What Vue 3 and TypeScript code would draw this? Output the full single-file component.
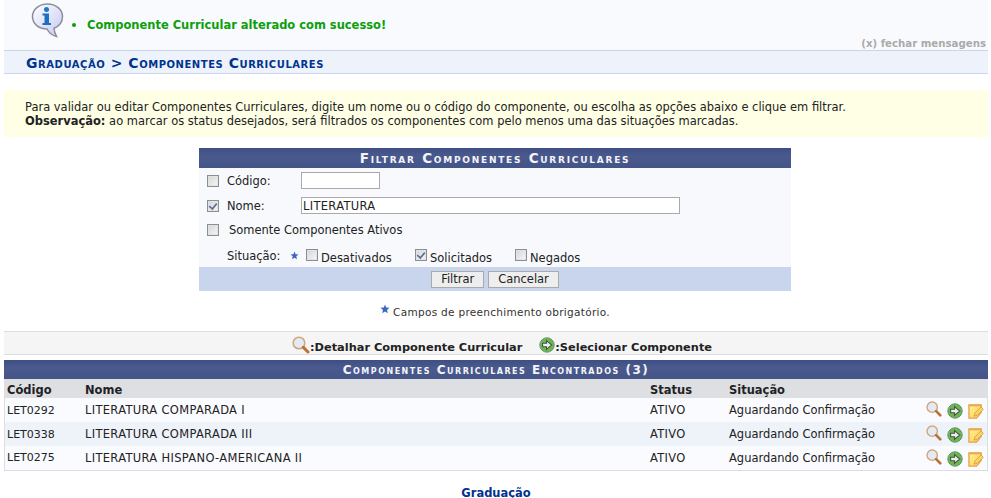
<script setup lang="ts">
interface Row { codigo: string; nome: string; status: string; situacao: string }
const rows: Row[] = [
  { codigo: 'LET0292', nome: 'LITERATURA COMPARADA I', status: 'ATIVO', situacao: 'Aguardando Confirmação' },
  { codigo: 'LET0338', nome: 'LITERATURA COMPARADA III', status: 'ATIVO', situacao: 'Aguardando Confirmação' },
  { codigo: 'LET0275', nome: 'LITERATURA HISPANO-AMERICANA II', status: 'ATIVO', situacao: 'Aguardando Confirmação' },
]
</script>

<template>
  <div class="page">
    <svg width="0" height="0" class="defs">
      <defs>
        <linearGradient id="bubble" x1="0" y1="0" x2="1" y2="1">
          <stop offset="0" stop-color="#ffffff" />
          <stop offset="1" stop-color="#c5c9f2" />
        </linearGradient>
        <linearGradient id="note" x1="0" y1="0" x2="1" y2="1">
          <stop offset="0" stop-color="#fff3a0" />
          <stop offset="1" stop-color="#fbd040" />
        </linearGradient>
        <symbol id="lens" viewBox="0 0 18 18">
          <circle cx="7" cy="7" r="5.800" fill="#e2ebf4" stroke="#d2a77a" stroke-width="1.600" />
          <path d="M11.400 11.400 16 16" stroke="#b9743c" stroke-width="3" stroke-linecap="round" />
        </symbol>
        <symbol id="go" viewBox="0 0 16 16">
          <circle cx="8" cy="8" r="7.200" fill="#6cb84e" stroke="#67926a" />
          <path d="M3.600 6.300h3.900V3.600L12.700 8l-5.200 4.400V9.700H3.600z" fill="#eceef0" stroke="#47544c" stroke-width="1.100" />
        </symbol>
        <symbol id="edit" viewBox="0 0 17 17">
          <path d="M1 2h13v8l-5 6H1z" fill="url(#note)" stroke="#e8a050" stroke-width="1.400" />
          <path d="M1 2.600h13" stroke="#f0a850" stroke-width="2" />
          <path d="M6.500 14 7.500 10.500 13.800 4.200 16.300 6.700 10 13z" fill="#f9d468" stroke="#d9984a" stroke-width=".9" />
        </symbol>
        <symbol id="star" viewBox="0 0 10 10">
          <path d="M5 0.500 6.200 3.600 9.500 3.800 7 5.900 7.800 9.200 5 7.400 2.200 9.200 3 5.900 0.500 3.800 3.800 3.600z" fill="#3b67c0" />
        </symbol>
      </defs>
    </svg>

    <section class="messages">
      <div class="msg-line">
        <svg class="info" width="34" height="36" viewBox="0 0 34 36">
          <path d="M16.500 2C25 2 31.500 7.500 31.500 14.500 31.500 20.500 27.500 24.500 23 26.200 23.200 29 24 32 25.500 34.500 21 33.500 17.800 30.500 16 27 7.500 27 1.500 21.500 1.500 14.500 1.500 7.500 8 2 16.500 2Z" fill="url(#bubble)" stroke="#8f8f9c" stroke-width="1.500" />
          <circle cx="15.500" cy="7.500" r="2.500" fill="#1f78c8" />
          <path d="M11.500 11.500h6.500v9.500h2v2h-8.500v-2h2v-7.500h-2z" fill="#1f6fc0" />
        </svg>
        <ul class="msg-list"><li>Componente Curricular alterado com sucesso!</li></ul>
      </div>
      <a class="close">(x) fechar mensagens</a>
    </section>

    <h2 class="title">Graduação &gt; Componentes Curriculares</h2>

    <div class="intro">
      <p>Para validar ou editar Componentes Curriculares, digite um nome ou o código do componente, ou escolha as opções abaixo e clique em filtrar.</p>
      <p><b>Observação:</b> ao marcar os status desejados, será filtrados os componentes com pelo menos uma das situações marcadas.</p>
    </div>

    <form class="filter" @submit.prevent>
      <div class="cap">Filtrar Componentes Curriculares</div>
      <div class="fbody">
        <div class="frow r1">
          <span class="cb"></span><label class="lab">Código:</label>
          <input class="in small" type="text" />
        </div>
        <div class="frow r2">
          <span class="cb on"></span><label class="lab">Nome:</label>
          <input class="in big" type="text" value="LITERATURA" />
        </div>
        <div class="frow r3">
          <span class="cb"></span><label class="lab wide">Somente Componentes Ativos</label>
        </div>
        <div class="frow r4">
          <label class="sit">Situação:</label>
          <svg class="star" width="9" height="9"><use href="#star" /></svg>
          <span class="cb s"></span><span class="opt o1">Desativados</span>
          <span class="cb s on"></span><span class="opt o2">Solicitados</span>
          <span class="cb s"></span><span class="opt">Negados</span>
        </div>
      </div>
      <div class="ffoot">
        <button type="button" class="btn">Filtrar</button>
        <button type="button" class="btn">Cancelar</button>
      </div>
    </form>

    <div class="req">
      <svg width="10" height="10" class="req-star"><use href="#star" /></svg>
      <span>Campos de preenchimento obrigatório.</span>
    </div>

    <div class="legend">
      <svg width="18" height="18"><use href="#lens" /></svg><span>:Detalhar Componente Curricular</span>
      <svg class="lg2" width="16" height="16"><use href="#go" /></svg><span>:Selecionar Componente</span>
    </div>

    <table class="list">
      <caption>Componentes Curriculares Encontrados (3)</caption>
      <thead>
        <tr><th class="c1">Código</th><th class="c2">Nome</th><th class="c3">Status</th><th class="c4">Situação</th><th class="c5"></th></tr>
      </thead>
      <tbody>
        <tr v-for="r in rows" :key="r.codigo">
          <td class="code">{{ r.codigo }}</td><td class="upper">{{ r.nome }}</td><td class="upper">{{ r.status }}</td><td>{{ r.situacao }}</td>
          <td class="acts">
            <div class="acts-in">
              <svg width="16" height="16"><use href="#lens" /></svg>
              <svg class="down" width="16" height="16"><use href="#go" /></svg>
              <svg class="down" width="16" height="16"><use href="#edit" /></svg>
            </div>
          </td>
        </tr>
      </tbody>
    </table>

    <a class="back">Graduação</a>
  </div>
</template>

<style>
html, body { margin: 0; background: #fff; }
</style>

<style scoped>
.page {
  width: 984px;
  margin-left: 4px;
  font-family: "DejaVu Sans", Verdana, sans-serif;
  font-size: 11.47px;
  color: #222;
  height: 498px;
  overflow: hidden;
}
.defs { position: absolute; }
p { margin: 0; }
.messages {
  height: 50px;
  background: #f9fafe;
  position: relative;
}
.msg-line { display: flex; align-items: flex-start; padding-left: 27px; }
.info { margin-top: 2px; }
.msg-list {
  margin: 18px 0 0 18px;
  padding: 0;
  list-style: none;
  color: #0c9f0c;
  font-weight: bold;
  line-height: 14px;
  position: relative;
  white-space: nowrap;
}
.msg-list li { margin-left: 4px; }
.msg-list li::before {
  content: "";
  position: absolute;
  left: -11px;
  top: 5px;
  width: 4px;
  height: 4px;
  border-radius: 50%;
  background: #0c9f0c;
}
.close {
  position: absolute;
  right: 2px;
  bottom: 0;
  font-size: 10.2px;
  font-weight: bold;
  color: #aaa;
  line-height: 13px;
}
.title {
  margin: 0;
  height: 22px;
  line-height: 24px;
  background: #eef3fb;
  border-top: 1px solid #c8d5ec;
  border-bottom: 1px solid #c8d5ec;
  padding-left: 22px;
  color: #003390;
  font-size: 14px;
  letter-spacing: .54px;
  font-weight: bold;
  font-variant: small-caps;
}
.intro {
  margin-top: 16px;
  height: 47px;
  box-sizing: border-box;
  background: #ffffe6;
  padding: 10px 0 0 21px;
  line-height: 14px;
  color: #222;
}
.filter {
  display: block;
  width: 592px;
  margin: 11px 0 0 195px;
}
.cap {
  height: 20px;
  line-height: 21px;
  text-align: center;
  color: #f4f4f8;
  font-weight: bold;
  font-size: 13.5px;
  letter-spacing: 1.75px;
  font-variant: small-caps;
  background: linear-gradient(#3f4f84 0, #4a5a8e 40%, #445487 100%);
}
.fbody { background: #f7f9fd; height: 99px; box-sizing: border-box; padding-top: 4px; }
.frow { display: flex; align-items: center; padding-left: 8px; }
.r1 { height: 17px; }
.r2 { height: 17px; margin-top: 8px; }
.r3 { height: 17px; margin-top: 7px; }
.r4 { height: 17px; margin-top: 10px; padding-left: 28px; }
.cb {
  width: 10px;
  height: 10px;
  border: 1px solid #8a8f96;
  background: linear-gradient(135deg, #d4d4d4, #f8f8f8);
  flex: none;
  position: relative;
  box-shadow: inset 0 0 0 1px #e3e3e3;
}
.cb.on::after {
  content: "";
  position: absolute;
  left: 2px;
  top: 0;
  width: 4px;
  height: 7px;
  border-right: 2px solid #5a6f9c;
  border-bottom: 2px solid #5a6f9c;
  transform: rotate(40deg) scale(.85);
}
.lab { width: 74px; margin-left: 8px; color: #222; }
.lab.wide { width: auto; margin-left: 10px; }
.in {
  box-sizing: border-box;
  border: 1px solid #aaa;
  height: 17px;
  padding: 0 1px;
  background: #fff;
  font: 11.47px "DejaVu Sans", Verdana, sans-serif;
  letter-spacing: .33px;
  color: #222;
  border-radius: 0;
  outline: none;
}
.small { width: 79px; }
.big { width: 379px; }
.sit { width: 63px; margin-top: -2px; }
.star { margin-right: 7px; margin-top: -2px; flex: none; }
.cb.s { margin-top: -3px; }
.opt { margin-left: 3px; margin-top: 3px; }
.o1 { width: 94px; flex: none; }
.o2 { width: 85px; flex: none; }
.ffoot {
  height: 24px;
  background: #c8d5ec;
  display: flex;
  justify-content: center;
  gap: 4px;
  align-items: center;
}
.btn {
  height: 17px;
  box-sizing: border-box;
  padding: 0 9px;
  border: 1px solid #aaa;
  background: #eeeeee;
  font: 11.47px "DejaVu Sans", Verdana, sans-serif;
  color: #222;
  border-radius: 0;
}
.req {
  height: 40px;
  box-sizing: border-box;
  padding: 13px 2px 0 0;
  display: flex;
  justify-content: center;
  font-size: 10.5px;
  letter-spacing: .3px;
  line-height: 16px;
  color: #333;
  gap: 3px;
}
.legend {
  height: 22px;
  padding-left: 12px;
  background: #f5f5f5;
  border-top: 1px solid #ddd;
  border-bottom: 1px solid #ddd;
  display: flex;
  justify-content: center;
  align-items: center;
  font-size: 11.37px;
  font-weight: bold;
  color: #222;
}
.legend span { margin-top: 8px; }
.legend svg { margin-top: 4px; flex: none; }
.legend .lg2 { margin-left: 17px; }
.list {
  margin-top: 5px;
  width: 984px;
  border-collapse: collapse;
  table-layout: fixed;
  border-bottom: 1px solid #ddd;
}
.list caption {
  height: 19px;
  line-height: 20px;
  background: linear-gradient(#3f4f84 0, #4a5a8e 40%, #445487 100%);
  color: #f4f4f8;
  font-weight: bold;
  font-size: 12px;
  letter-spacing: 1.5px;
  font-variant: small-caps;
  text-align: center;
}
.list th {
  height: 19px;
  padding: 2px 0 0 3px;
  box-sizing: border-box;
  background: #dedfe3;
  text-align: left;
  font-weight: bold;
  color: #222;
}
.c1 { width: 78px; }
.c2 { width: 565px; }
.c3 { width: 79px; }
.c4 { width: 199px; }
.list td {
  height: 24px;
  box-sizing: border-box;
  padding: 0 0 0 3px;
  color: #222;
  white-space: nowrap;
  background: #fafbff;
}
.list td:first-child { box-shadow: inset 1px 0 #ddd; }
.list td:last-child { box-shadow: inset -1px 0 #ddd; }
.list tbody tr:nth-child(even) td { background: #eef2f9; }
.list td.code { font-size: 11px; }
.list td.upper { letter-spacing: .33px; }
.list td.acts { padding: 0 0 0 1px; }
.acts-in { display: flex; gap: 5px; align-items: flex-start; }
.acts-in .down { margin-top: 2px; }
.back {
  display: block;
  text-align: center;
  margin-top: 15px;
  color: #003390;
  font-weight: bold;
  line-height: 14px;
}
</style>
